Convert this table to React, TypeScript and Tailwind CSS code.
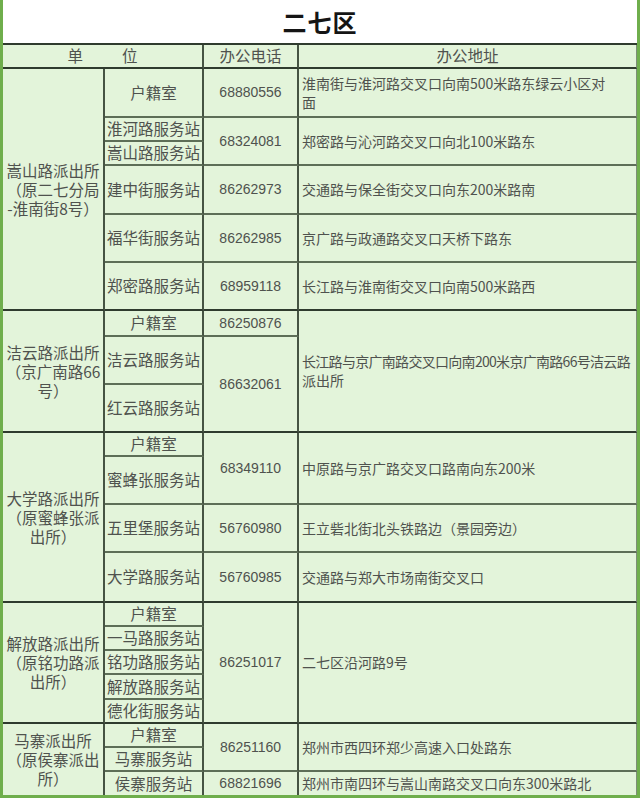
import React from 'react';

type Cell = { c: number; r: number; s: number; t: React.ReactNode; kind: 'unit' | 'sub' | 'tel' | 'addr' };

const GROUP_ENDS = [7, 10, 14, 19];
const LAST_ROW = 22;

const colStart: Record<number, string> = {
  1: 'col-start-1',
  2: 'col-start-2',
  3: 'col-start-3',
  4: 'col-start-4',
};

const rowStart: Record<number, string> = {
  2: 'row-start-2', 3: 'row-start-3', 4: 'row-start-4', 5: 'row-start-5', 6: 'row-start-6',
  7: 'row-start-7', 8: 'row-start-8', 9: 'row-start-9', 10: 'row-start-10', 11: 'row-start-11',
  12: 'row-start-12', 13: 'row-start-13', 14: 'row-start-14', 15: 'row-start-15', 16: 'row-start-16',
  17: 'row-start-17', 18: 'row-start-18', 19: 'row-start-19', 20: 'row-start-20', 21: 'row-start-21',
  22: 'row-start-22',
};

const rowSpan: Record<number, string> = {
  1: 'row-span-1', 2: 'row-span-2', 3: 'row-span-3', 4: 'row-span-4', 5: 'row-span-5', 6: 'row-span-6',
};

const lines = (...l: string[]) => l.map((x, i) => <span key={i} className="block whitespace-nowrap">{x}</span>);

const cells: Cell[] = [
  // 嵩山路派出所
  { c: 1, r: 2, s: 6, kind: 'unit', t: lines('嵩山路派出所', '（原二七分局', '-淮南街8号）') },
  { c: 2, r: 2, s: 1, kind: 'sub', t: '户籍室' },
  { c: 2, r: 3, s: 1, kind: 'sub', t: '淮河路服务站' },
  { c: 2, r: 4, s: 1, kind: 'sub', t: '嵩山路服务站' },
  { c: 2, r: 5, s: 1, kind: 'sub', t: '建中街服务站' },
  { c: 2, r: 6, s: 1, kind: 'sub', t: '福华街服务站' },
  { c: 2, r: 7, s: 1, kind: 'sub', t: '郑密路服务站' },
  { c: 3, r: 2, s: 1, kind: 'tel', t: '68880556' },
  { c: 3, r: 3, s: 2, kind: 'tel', t: '68324081' },
  { c: 3, r: 5, s: 1, kind: 'tel', t: '86262973' },
  { c: 3, r: 6, s: 1, kind: 'tel', t: '86262985' },
  { c: 3, r: 7, s: 1, kind: 'tel', t: '68959118' },
  { c: 4, r: 2, s: 1, kind: 'addr', t: lines('淮南街与淮河路交叉口向南500米路东绿云小区对', '面') },
  { c: 4, r: 3, s: 2, kind: 'addr', t: '郑密路与沁河路交叉口向北100米路东' },
  { c: 4, r: 5, s: 1, kind: 'addr', t: '交通路与保全街交叉口向东200米路南' },
  { c: 4, r: 6, s: 1, kind: 'addr', t: '京广路与政通路交叉口天桥下路东' },
  { c: 4, r: 7, s: 1, kind: 'addr', t: '长江路与淮南街交叉口向南500米路西' },

  // 洁云路派出所
  { c: 1, r: 8, s: 3, kind: 'unit', t: lines('洁云路派出所', '（京广南路66', '号）') },
  { c: 2, r: 8, s: 1, kind: 'sub', t: '户籍室' },
  { c: 2, r: 9, s: 1, kind: 'sub', t: '洁云路服务站' },
  { c: 2, r: 10, s: 1, kind: 'sub', t: '红云路服务站' },
  { c: 3, r: 8, s: 1, kind: 'tel', t: '86250876' },
  { c: 3, r: 9, s: 2, kind: 'tel', t: '86632061' },
  {
    c: 4,
    r: 8,
    s: 3,
    kind: 'addr',
    t: (
      <>
        <span className="block whitespace-nowrap tracking-[-0.7px]">长江路与京广南路交叉口向南200米京广南路66号洁云路</span>
        <span className="block whitespace-nowrap">派出所</span>
      </>
    ),
  },

  // 大学路派出所
  { c: 1, r: 11, s: 4, kind: 'unit', t: lines('大学路派出所', '（原蜜蜂张派', '出所）') },
  { c: 2, r: 11, s: 1, kind: 'sub', t: '户籍室' },
  { c: 2, r: 12, s: 1, kind: 'sub', t: '蜜蜂张服务站' },
  { c: 2, r: 13, s: 1, kind: 'sub', t: '五里堡服务站' },
  { c: 2, r: 14, s: 1, kind: 'sub', t: '大学路服务站' },
  { c: 3, r: 11, s: 2, kind: 'tel', t: '68349110' },
  { c: 3, r: 13, s: 1, kind: 'tel', t: '56760980' },
  { c: 3, r: 14, s: 1, kind: 'tel', t: '56760985' },
  { c: 4, r: 11, s: 2, kind: 'addr', t: '中原路与京广路交叉口路南向东200米' },
  { c: 4, r: 13, s: 1, kind: 'addr', t: '王立砦北街北头铁路边（景园旁边）' },
  { c: 4, r: 14, s: 1, kind: 'addr', t: '交通路与郑大市场南街交叉口' },

  // 解放路派出所
  { c: 1, r: 15, s: 5, kind: 'unit', t: lines('解放路派出所', '（原铭功路派', '出所）') },
  { c: 2, r: 15, s: 1, kind: 'sub', t: '户籍室' },
  { c: 2, r: 16, s: 1, kind: 'sub', t: '一马路服务站' },
  { c: 2, r: 17, s: 1, kind: 'sub', t: '铭功路服务站' },
  { c: 2, r: 18, s: 1, kind: 'sub', t: '解放路服务站' },
  { c: 2, r: 19, s: 1, kind: 'sub', t: '德化街服务站' },
  { c: 3, r: 15, s: 5, kind: 'tel', t: '86251017' },
  { c: 4, r: 15, s: 5, kind: 'addr', t: '二七区沿河路9号' },

  // 马寨派出所
  { c: 1, r: 20, s: 3, kind: 'unit', t: lines('马寨派出所', '（原侯寨派出', '所）') },
  { c: 2, r: 20, s: 1, kind: 'sub', t: '户籍室' },
  { c: 2, r: 21, s: 1, kind: 'sub', t: '马寨服务站' },
  { c: 2, r: 22, s: 1, kind: 'sub', t: '侯寨服务站' },
  { c: 3, r: 20, s: 2, kind: 'tel', t: '86251160' },
  { c: 3, r: 22, s: 1, kind: 'tel', t: '68821696' },
  { c: 4, r: 20, s: 2, kind: 'addr', t: '郑州市西四环郑少高速入口处路东' },
  { c: 4, r: 22, s: 1, kind: 'addr', t: '郑州市南四环与嵩山南路交叉口向东300米路北' },
];

function TableCell({ cell }: { cell: Cell }) {
  const last = cell.r + cell.s - 1;
  const bottom =
    last === LAST_ROW ? '' : GROUP_ENDS.includes(last) ? 'border-b-2 border-b-[#2f3b2e]' : 'border-b-2 border-b-[#5d6e57]';
  const right = cell.c === 4 ? 'border-r border-r-[#7d8e77]' : 'border-r-2 border-r-[#465443]';

  const kindCls = {
    unit: 'justify-center text-center text-[15.5px] leading-[19px]',
    sub: 'justify-center text-center text-[15.5px] leading-none whitespace-nowrap',
    tel: "justify-center font-['Liberation_Sans',sans-serif] text-[14px]",
    addr: 'justify-start pl-[3px] text-[14px] leading-[19px] whitespace-nowrap',
  }[cell.kind];

  return (
    <div
      className={`flex items-center overflow-hidden bg-[#e3f4da] ${colStart[cell.c]} ${rowStart[cell.r]} ${rowSpan[cell.s]} ${bottom} ${right} ${kindCls}`}
    >
      <div>{cell.t}</div>
    </div>
  );
}

export default function App() {
  return (
    <div className="w-[640px] h-[798px] overflow-hidden bg-white border-x-[3px] border-b-[3px] border-[#6fae4c] font-['Noto_Sans_CJK_SC',sans-serif] text-[#4f524e]">
      {/* Title */}
      <div className="h-[45px] flex items-center justify-center border-b-2 border-b-[#2f3b2e] bg-white">
        <h1 className="text-[24px] font-bold text-[#151515] tracking-[1px] leading-none">二七区</h1>
      </div>

      <div className="grid grid-cols-[102px_99px_95px_338px] grid-rows-[24px_49px_24px_24px_49px_48px_48px_26px_48px_48px_24px_48px_48px_50px_24px_24px_24px_25px_24px_24px_24px_23px]">
        {/* Header */}
        <div className="col-span-2 row-start-1 flex items-center justify-center gap-[39px] bg-[#e3f4da] border-b-2 border-b-[#2f3b2e] border-r-2 border-r-[#465443] text-[15.5px] leading-none">
          <span>单</span>
          <span>位</span>
        </div>
        <div className="col-start-3 row-start-1 flex items-center justify-center bg-[#e3f4da] border-b-2 border-b-[#2f3b2e] border-r-2 border-r-[#465443] text-[15.5px] leading-none">
          办公电话
        </div>
        <div className="col-start-4 row-start-1 flex items-center justify-center bg-[#e3f4da] border-b-2 border-b-[#2f3b2e] border-r border-r-[#7d8e77] text-[15.5px] leading-none">
          办公地址
        </div>

        {cells.map((cell, i) => (
          <TableCell key={i} cell={cell} />
        ))}
      </div>
    </div>
  );
}
